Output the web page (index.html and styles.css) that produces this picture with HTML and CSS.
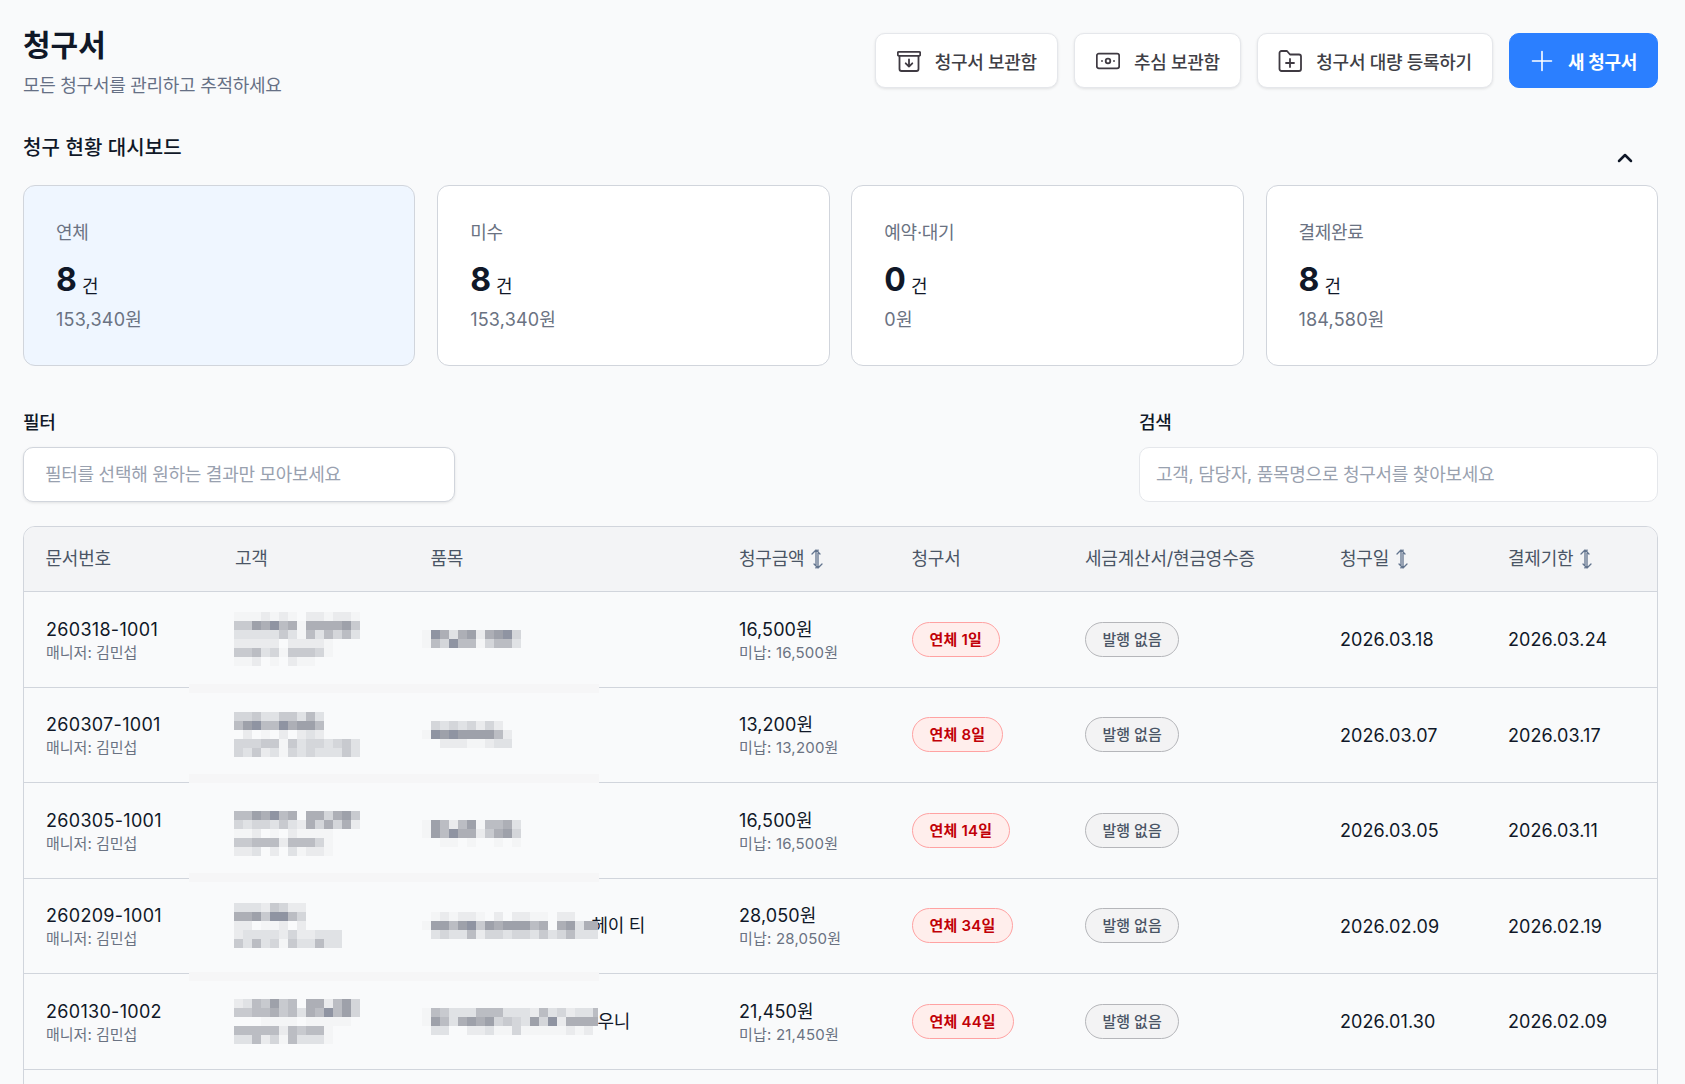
FILE: index.html
```html
<!DOCTYPE html>
<html lang="ko">

<head>
    <meta charset="UTF-8">
    <meta name="viewport" content="width=device-width, initial-scale=1.0">
    <title>청구서</title>
    <link rel="stylesheet" href="styles.css">
</head>

<body>

    <div class="page">

        <header class="top">
            <div>
                <h1 class="title">청구서</h1>
                <p class="subtitle">모든 청구서를 관리하고 추적하세요</p>
            </div>
            <div class="actions">
                <button class="btn btn-wide">
                    <svg class="icon" viewBox="0 0 24 24"><rect x="0.8" y="2.8" width="22.4" height="4" rx="1"/><path d="M2.5 7v13a2 2 0 0 0 2 2h15a2 2 0 0 0 2-2V7"/><path d="M12 10.5v7M8.7 14.3l3.3 3.3 3.3-3.3"/></svg>
                    청구서 보관함
                </button>
                <button class="btn btn-wide">
                    <svg class="icon" viewBox="0 0 24 24"><rect x="0.8" y="4.7" width="22.4" height="14.600" rx="2"/><circle cx="12" cy="12" r="2.3"/><path d="M6 12h.01M18 12h.01"/></svg>
                    추심 보관함
                </button>
                <button class="btn">
                    <svg class="icon" viewBox="0 0 24 24"><path d="M1.5 4a2 2 0 0 1 2-2h5.5l3 3.5h9a2 2 0 0 1 2 2V20a2 2 0 0 1-2 2h-17.500a2 2 0 0 1-2-2z"/><path d="M12 10v8M8 14h8"/></svg>
                    청구서 대량 등록하기
                </button>
                <button class="btn btn-primary">
                    <svg class="icon" viewBox="0 0 24 24"><path d="M12 2.500v19M2.500 12h19"/></svg>
                    새 청구서
                </button>
            </div>
        </header>

        <div class="section-head">
            <h2 class="section-title">청구 현황 대시보드</h2>
            <svg class="chevron" viewBox="0 0 24 24"><path d="M6 15l6-6 6 6"/></svg>
        </div>

        <section class="cards">
            <div class="card card-active">
                <div class="card-label">연체</div>
                <div class="card-count"><b>8</b> <span class="card-unit">건</span></div>
                <div class="card-amount">153,340원</div>
            </div>
            <div class="card">
                <div class="card-label">미수</div>
                <div class="card-count"><b>8</b> <span class="card-unit">건</span></div>
                <div class="card-amount">153,340원</div>
            </div>
            <div class="card">
                <div class="card-label">예약·대기</div>
                <div class="card-count"><b>0</b> <span class="card-unit">건</span></div>
                <div class="card-amount">0원</div>
            </div>
            <div class="card">
                <div class="card-label">결제완료</div>
                <div class="card-count"><b>8</b> <span class="card-unit">건</span></div>
                <div class="card-amount">184,580원</div>
            </div>
        </section>

        <section class="filters">
            <div class="filter-box">
                <div class="field-label">필터</div>
                <div class="field field-filter">필터를 선택해 원하는 결과만 모아보세요</div>
            </div>
            <div class="search-box">
                <div class="field-label">검색</div>
                <div class="field field-search">고객, 담당자, 품목명으로 청구서를 찾아보세요</div>
            </div>
        </section>

        <div class="table-wrap">
            <table class="table">
                <colgroup>
                    <col class="c-doc">
                    <col class="c-customer">
                    <col class="c-item">
                    <col class="c-money">
                    <col class="c-bill">
                    <col class="c-tax">
                    <col class="c-date">
                    <col class="c-due">
                </colgroup>
                <thead>
                    <tr>
                        <th>문서번호</th>
                        <th>고객</th>
                        <th>품목</th>
                        <th>청구금액<svg class="sort" viewBox="0 0 14 20"><path d="M6 19V1M2 5l4-4 4 4M8 1v18M4 15l4 4 4-4"/></svg></th>
                        <th>청구서</th>
                        <th>세금계산서/현금영수증</th>
                        <th>청구일<svg class="sort" viewBox="0 0 14 20"><path d="M6 19V1M2 5l4-4 4 4M8 1v18M4 15l4 4 4-4"/></svg></th>
                        <th>결제기한<svg class="sort" viewBox="0 0 14 20"><path d="M6 19V1M2 5l4-4 4 4M8 1v18M4 15l4 4 4-4"/></svg></th>
                    </tr>
                </thead>
                <tbody>
                    <tr>
                        <td><div class="main doc-no">260318-1001</div><div class="sub">매니저: 김민섭</div></td>
                        <td><div class="mosaic" data-rows="1112121.221221 55879671777785 33333531636463 22222.22221... 55634155541... 112.1.211....."></div></td>
                        <td><div class="item"><div class="mosaic" data-rows="19737827894 16496614663"></div></div></td>
                        <td><div class="main">16,500원</div><div class="sub sub-money">미납: 16,500원</div></td>
                        <td><span class="badge badge-red">연체 1일</span></td>
                        <td><span class="badge badge-gray">발행 없음</span></td>
                        <td><div class="main">2026.03.18</div></td>
                        <td><div class="main">2026.03.24</div></td>
                    </tr>
                    <tr>
                        <td><div class="main doc-no">260307-1001</div><div class="sub">매니저: 김민섭</div></td>
                        <td><div class="mosaic" data-rows="4453355363.... 6896697886.... .2.1.2.232.... 44455153443453 43523143433353"></div></td>
                        <td><div class="item"><div class="mosaic" data-rows=".43434242.. 1989888862 ..22211233"></div></div></td>
                        <td><div class="main">13,200원</div><div class="sub sub-money">미납: 13,200원</div></td>
                        <td><span class="badge badge-red">연체 8일</span></td>
                        <td><span class="badge badge-gray">발행 없음</span></td>
                        <td><div class="main">2026.03.07</div></td>
                        <td><div class="main">2026.03.17</div></td>
                    </tr>
                    <tr>
                        <td><div class="main doc-no">260305-1001</div><div class="sub">매니저: 김민섭</div></td>
                        <td><div class="mosaic mosaic-low" data-rows="6687967.774785 43443532747472 112.1.21111... 55666266641... 223.2.31221..."></div></td>
                        <td><div class="item"><div class="mosaic mosaic-low" data-rows="18626816673 18697725784 ..11.1..1.1"></div></div></td>
                        <td><div class="main">16,500원</div><div class="sub sub-money">미납: 16,500원</div></td>
                        <td><span class="badge badge-red">연체 14일</span></td>
                        <td><span class="badge badge-gray">발행 없음</span></td>
                        <td><div class="main">2026.03.05</div></td>
                        <td><div class="main">2026.03.11</div></td>
                    </tr>
                    <tr>
                        <td><div class="main doc-no">260209-1001</div><div class="sub">매니저: 김민섭</div></td>
                        <td><div class="mosaic" data-rows="33325422 77859964 22.112.2 233332422333 536341533633"></div></td>
                        <td><div class="item"><div class="mosaic mosaic-wide" data-rows=".121221.2.2211.22... 18868958788867.78377 .3433624434435346333"></div><span class="item-rest item-rest-under">헤이 티</span></div></td>
                        <td><div class="main">28,050원</div><div class="sub sub-money">미납: 28,050원</div></td>
                        <td><span class="badge badge-red">연체 34일</span></td>
                        <td><span class="badge badge-gray">발행 없음</span></td>
                        <td><div class="main">2026.02.09</div></td>
                        <td><div class="main">2026.02.19</div></td>
                    </tr>
                    <tr>
                        <td><div class="main doc-no">260130-1002</div><div class="sub">매니저: 김민섭</div></td>
                        <td><div class="mosaic" data-rows="2365856.772684 55667563769684 ...1111.11111. 66666265661... 33624163331..."></div></td>
                        <td><div class="item"><div class="mosaic mosaic-wide" data-rows="16533366633326342336 18637878454384927777 .33..22311411111212."></div><span class="item-rest">우니</span></div></td>
                        <td><div class="main">21,450원</div><div class="sub sub-money">미납: 21,450원</div></td>
                        <td><span class="badge badge-red">연체 44일</span></td>
                        <td><span class="badge badge-gray">발행 없음</span></td>
                        <td><div class="main">2026.01.30</div></td>
                        <td><div class="main">2026.02.09</div></td>
                    </tr>
                    <tr>
                        <td colspan="8"></td>
                    </tr>
                </tbody>
            </table>

            <div class="band band-1"></div>
            <div class="band band-2"></div>
            <div class="band band-3"></div>
            <div class="band band-4"></div>
        </div>

    </div>

    <script src="mosaic.js"></script>

</body>

</html>
```

FILE: styles.css
```css
* {
    margin: 0;
    padding: 0;
    box-sizing: border-box;
}

body {
    height: 100vh;
    overflow: hidden;
    background-color: #f9fafb;
    color: #101828;
    font-family: Inter, "Noto Sans CJK KR", sans-serif;
}

.page {
    padding: 27px 27px 0 23px;
}

.top {
    display: flex;
    justify-content: space-between;
}

.title {
    font-size: 30px;
    line-height: 36px;
    font-weight: 700;
}

.subtitle {
    margin-top: 9px;
    font-size: 18px;
    line-height: 28px;
    letter-spacing: -.28px;
    color: #667085;
}

.actions {
    display: flex;
    gap: 16px;
    margin-top: 6px;
    height: 55px;
}

.btn {
    display: flex;
    align-items: center;
    gap: 14px;
    padding: 0 20px;
    background-color: #fff;
    border: 1px solid #e5e7eb;
    border-radius: 10px;
    box-shadow: 0 1px 3px rgba(0, 0, 0, .1);
    font-family: inherit;
    font-size: 18px;
    font-weight: 500;
    letter-spacing: -.28px;
    color: #3f3f46;
}

.btn-wide {
    padding: 0 20.500px;
}

.btn-primary {
    background-color: #2b7fff;
    border-color: #2b7fff;
    box-shadow: none;
    color: #fff;
    font-weight: 700;
}

.icon {
    width: 24px;
    height: 24px;
    fill: none;
    stroke: #3f3a42;
    stroke-width: 1.8;
    stroke-linecap: round;
    stroke-linejoin: round;
}

.btn-primary .icon {
    stroke: #fff;
    stroke-width: 1.6;
}

.section-head {
    display: flex;
    justify-content: space-between;
    height: 36px;
    margin-top: 34px;
}

.section-title {
    font-size: 20px;
    line-height: 28px;
    font-weight: 500;
    letter-spacing: .1px;
}

.chevron {
    align-self: flex-end;
    width: 24px;
    height: 24px;
    margin-right: 21px;
    fill: none;
    stroke: #101828;
    stroke-width: 2.5;
    stroke-linecap: round;
    stroke-linejoin: round;
}

.cards {
    display: grid;
    grid-template-columns: repeat(4, 1fr);
    gap: 21.700px;
    margin-top: 15px;
}

.card {
    height: 181px;
    padding: 34px 32px 0;
    background-color: #fff;
    border: 1px solid #d1d5dc;
    border-radius: 12px;
}

.card-active {
    background-color: #eff6ff;
}

.card-label {
    font-size: 18px;
    line-height: 26px;
    letter-spacing: -.28px;
    color: #6a7282;
}

.card-count {
    margin-top: 16px;
    font-size: 18px;
    line-height: 36px;
}

.card-count b {
    font-size: 32px;
}

.card-unit {
    position: relative;
    top: 2px;
}

.card-amount {
    margin-top: 3px;
    font-size: 18px;
    line-height: 28px;
    letter-spacing: .2px;
    color: #6a7282;
}

.filters {
    display: flex;
    justify-content: space-between;
    margin-top: 45px;
}

.filter-box {
    width: 432px;
}

.search-box {
    width: 519px;
}

.field-label {
    font-size: 18px;
    line-height: 24px;
    font-weight: 500;
    letter-spacing: -.28px;
}

.field {
    height: 55px;
    margin-top: 12px;
    background-color: #fff;
    border-radius: 10px;
    font-size: 18px;
    line-height: 54px;
    letter-spacing: -.28px;
    color: #99a1af;
}

.field-filter {
    padding-left: 21px;
    border: 1px solid #d1d5dc;
    box-shadow: 0 1px 3px rgba(0, 0, 0, .1);
}

.field-search {
    padding-left: 16px;
    border: 1px solid #e5e7eb;
}

.table-wrap {
    position: relative;
    margin-top: 24px;
    border: 1px solid #d1d5dc;
    border-radius: 12px 12px 0 0;
    overflow: hidden;
}

.table {
    width: 100%;
    table-layout: fixed;
    border-collapse: separate;
    border-spacing: 0;
}

.c-doc { width: 189px; }
.c-customer { width: 195.500px; }
.c-item { width: 308.500px; }
.c-money { width: 172.500px; }
.c-bill { width: 173.500px; }
.c-tax { width: 255px; }
.c-date { width: 168px; }

th {
    height: 65px;
    padding: 0 0 4px 22px;
    text-align: left;
    background-color: #f3f4f6;
    border-bottom: 1px solid #d1d5dc;
    font-size: 18px;
    font-weight: 400;
    letter-spacing: -.2px;
    color: #4a5565;
}

th:first-child {
    padding-left: 21.500px;
}

.sort {
    width: 14px;
    height: 20px;
    margin-left: 6px;
    vertical-align: -4px;
    fill: none;
    stroke: #62748e;
    stroke-width: 1.300;
    stroke-linecap: round;
    stroke-linejoin: round;
}

td {
    height: 95.500px;
    padding-left: 22px;
    border-bottom: 1px solid #d1d5dc;
    vertical-align: middle;
}

.main {
    padding-top: 2px;
    font-size: 18px;
    line-height: 26px;
    letter-spacing: .1px;
    color: #101828;
}

.doc-no {
    letter-spacing: .3px;
}

.sub {
    margin-top: -1px;
    font-size: 15px;
    line-height: 22px;
    color: #6a7282;
}

.sub-money {
    letter-spacing: .2px;
}

.item {
    display: flex;
    align-items: center;
    margin-left: -9px;
}

.item-rest {
    margin-top: -3px;
    font-size: 18px;
    letter-spacing: -.28px;
    color: #101828;
}

.item-rest-under {
    margin-left: -6px;
}

.mosaic {
    position: relative;
    z-index: 1;
    width: fit-content;
    margin-left: -1px;
}

.item .mosaic {
    margin-left: 0;
}

.mosaic-low {
    top: 3px;
}

.item .mosaic-wide {
    flex: none;
    width: 176px;
    overflow: hidden;
}

.mosaic-row {
    display: flex;
}

.cell {
    flex: none;
    width: 9px;
    height: 9px;
}

.s1 { background-color: #f4f5f6; }
.s2 { background-color: #eaebed; }
.s3 { background-color: #e0e2e5; }
.s4 { background-color: #d4d6da; }
.s5 { background-color: #c8cacf; }
.s6 { background-color: #bbbdc3; }
.s7 { background-color: #adafb6; }
.s8 { background-color: #9ea1aa; }
.s9 { background-color: #8f94a2; }

.badge {
    display: inline-block;
    height: 35px;
    border-radius: 18px;
    font-size: 15px;
    line-height: 33px;
}

.badge-red {
    padding: 0 17px;
    background-color: #ffeeec;
    border: 1px solid #ffa2a2;
    letter-spacing: .2px;
    color: #c10007;
    font-weight: 600;
}

.badge-gray {
    padding: 0 16.500px;
    background-color: #f3f3f4;
    border: 1px solid #b5b6ba;
    color: #4a5565;
    font-weight: 500;
}

.band {
    position: absolute;
    z-index: 2;
    left: 165px;
    width: 410px;
    height: 9px;
    background-color: #f6f6f7;
}

.band-1 { top: 157px; }
.band-2 { top: 247px; }
.band-3 { top: 346px; }
.band-4 { top: 445px; }
```

FILE: mosaic.js
```js
// 가려진 영역을 data-rows 값으로 그린다
let mosaics = document.querySelectorAll('.mosaic');

for (let i = 0; i < mosaics.length; i++) {
    let rows = mosaics[i].dataset.rows.split(' ');
    rows.forEach((row) => {
        let line = document.createElement('div');
        line.className = 'mosaic-row';
        for (let ch of row) {
            let cell = document.createElement('span');
            cell.className = ch == '.' ? 'cell' : 'cell s' + ch;
            line.appendChild(cell);
        }
        mosaics[i].appendChild(line);
    });
}
```
